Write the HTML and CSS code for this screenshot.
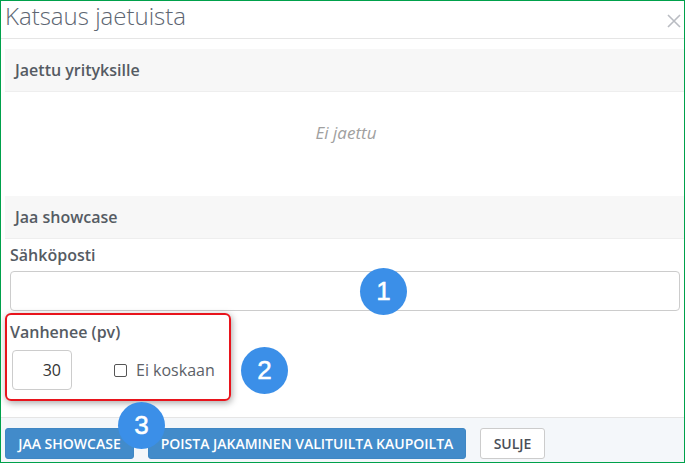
FILE: index.html
```html
<!DOCTYPE html>
<html lang="fi">
<head>
  <meta charset="UTF-8" />
  <title>Katsaus jaetuista</title>
  <link rel="stylesheet" href="styles.css">
</head>
<body>
  <div class="modal">
    <div class="modal-header">
      <h1>Katsaus jaetuista</h1>
      <span class="close">
        <svg width="14" height="14" viewBox="0 0 14 14"><path d="M1 1L13 13M13 1L1 13" stroke="#b9bcc2" stroke-width="1.6" fill="none"/></svg>
      </span>
    </div>

    <div class="section-title first">Jaettu yrityksille</div>
    <div class="empty">Ei jaettu</div>
    <div class="section-title">Jaa showcase</div>

    <div class="form">
      <label class="field-label">Sähköposti</label>
      <input class="email" type="text">
      <div class="highlight">
        <label class="field-label">Vanhenee (pv)</label>
        <div class="expire-row">
          <input class="days" type="text" value="30">
          <label class="never"><span class="check"></span>Ei koskaan</label>
        </div>
      </div>
    </div>

    <div class="modal-footer">
      <button class="btn primary share">JAA SHOWCASE</button>
      <button class="btn primary remove">POISTA JAKAMINEN VALITUILTA KAUPOILTA</button>
      <button class="btn plain">SULJE</button>
    </div>

    <!-- numerot kuvan paalla -->
    <span class="bubble b1">1</span>
    <span class="bubble b2">2</span>
    <span class="bubble b3">3</span>
  </div>
</body>
</html>
```

FILE: styles.css
```css
* {
  box-sizing: border-box;
}

html, body {
  margin: 0;
  background: #fff;
}

body {
  font-family: "Open Sans", Arial, sans-serif;
  color: #555b63;
}

.modal {
  position: relative;
  width: 685px;
  height: 463px;
  border: 1px solid #00a14b;
  display: flex;
  flex-direction: column;
  overflow: hidden;
}

.modal-header {
  height: 38px;
  flex: none;
  display: flex;
  justify-content: space-between;
  align-items: center;
  padding: 0 3px 7px 4px;
  border-bottom: 1px solid #e5e5e5;
}

.modal-header h1 {
  margin: 0;
  font-size: 24px;
  font-weight: 300;
  line-height: 30px;
  color: #5d6672;
}

.close {
  display: flex;
  margin-top: 9px;
}

.section-title {
  height: 43px;
  flex: none;
  margin: 0 0 0 4px;
  padding-left: 10px;
  background: #f7f7f7;
  border-bottom: 1px solid #eeeeee;
  font-size: 16px;
  font-weight: 600;
  line-height: 42px;
}

.section-title.first {
  margin-top: 10px;
}

.empty {
  height: 104px;
  flex: none;
  padding: 30px 0 0 7px;
  text-align: center;
  font-size: 17px;
  font-style: italic;
  line-height: 22px;
  color: #a0a0a0;
}

.form {
  flex: 1;
  padding: 6px 4px 0 4px;
}

.field-label {
  display: block;
  font-size: 16px;
  font-weight: 600;
  line-height: 20px;
}

.form > .field-label {
  padding-left: 5px;
}

.email {
  display: block;
  width: 670px;
  height: 40px;
  margin: 6px 0 2px 5px;
  border: 1px solid #ccc;
  border-radius: 4px;
}

.highlight {
  width: 226px;
  height: 88px;
  padding: 7px 0 0 3px;
  border: 2px solid #e8141c;
  border-radius: 6px;
  box-shadow: 1px 2px 7px rgba(0, 0, 0, 0.35);
}

.expire-row {
  display: flex;
  align-items: center;
  margin-top: 8px;
  padding-left: 2px;
}

.days {
  width: 60px;
  height: 40px;
  padding: 0 10px;
  border: 1px solid #ccc;
  border-radius: 4px;
  text-align: right;
  font-family: inherit;
  font-size: 16px;
  color: #333;
}

.never {
  display: flex;
  align-items: center;
  gap: 9px;
  margin-left: 42px;
  font-size: 16px;
  color: #5c6168;
}

.check {
  width: 13px;
  height: 13px;
  border: 1px solid #555;
  border-radius: 2px;
}

.modal-footer {
  height: 45px;
  flex: none;
  display: flex;
  gap: 14px;
  padding: 10px 0 0 4px;
  background: #f4f7fa;
  border-top: 1px solid #e5e5e5;
}

.btn {
  height: 31px;
  padding: 0;
  border-radius: 3px;
  font-family: inherit;
  font-size: 14px;
  font-weight: 600;
  line-height: 29px;
}

.primary {
  background: #428bca;
  border: 1px solid #3f87c4;
  color: #fff;
}

.share {
  width: 129px;
}

.remove {
  width: 318px;
}

.plain {
  width: 65px;
  background: #fff;
  border: 1px solid #ccc;
  color: #4a4f57;
}

.bubble {
  position: absolute;
  width: 47px;
  height: 47px;
  border-radius: 50%;
  background: #3b8fe8;
  color: #fff;
  font-family: "Liberation Sans", Arial, sans-serif;
  font-size: 26px;
  line-height: 46px;
  text-align: center;
  -webkit-text-stroke: 0.5px #fff;
}

.b1 {
  left: 359px;
  top: 267px;
}

.b2 {
  left: 240px;
  top: 346px;
}

.b3 {
  left: 117px;
  top: 401px;
}
```
